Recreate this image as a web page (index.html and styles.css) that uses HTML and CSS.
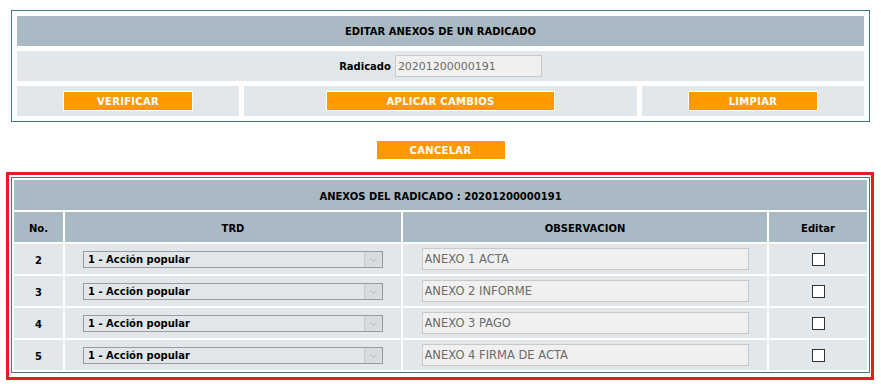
FILE: index.html
```html
<html>
<head>
	<title>Editar anexos</title>
	<meta http-equiv="Content-Type" content="text/html; charset=utf-8" />
	<link rel="stylesheet" href="styles.css">
</head>
<body>

<div class="editar">
	<div class="titulo">EDITAR ANEXOS DE UN RADICADO</div>
	<div class="radicado"><b>Radicado</b><input class="caja num" type="text" value="20201200000191" readonly></div>
	<div class="acciones">
		<div class="celda"><button class="boton">VERIFICAR</button></div>
		<div class="celda"><button class="boton largo">APLICAR CAMBIOS</button></div>
		<div class="celda"><button class="boton">LIMPIAR</button></div>
	</div>
</div>

<div class="cancelar"><button class="boton">CANCELAR</button></div>

<div class="marco">
<table class="anexos">
	<colgroup>
		<col class="c-no"><col class="c-trd"><col class="c-obs"><col class="c-edit">
	</colgroup>
	<tr><th colspan="4">ANEXOS DEL RADICADO : 20201200000191</th></tr>
	<tr><th>No.</th><th>TRD</th><th>OBSERVACION</th><th>Editar</th></tr>
	<tr>
		<td class="no">2</td>
		<td><span class="sel"><select><option>1 - Acci&oacute;n popular</option></select><span class="flecha"><svg width="17" height="15" viewBox="0 0 17 15"><path d="M5 6.5 L8.5 9.5 L12 6.5" fill="none" stroke="#b4b8bc" stroke-width="1"/></svg></span></span></td>
		<td><input class="caja obs" type="text" value="ANEXO 1 ACTA" readonly></td>
		<td><input class="check" type="checkbox"></td>
	</tr>
	<tr>
		<td class="no">3</td>
		<td><span class="sel"><select><option>1 - Acci&oacute;n popular</option></select><span class="flecha"><svg width="17" height="15" viewBox="0 0 17 15"><path d="M5 6.5 L8.5 9.5 L12 6.5" fill="none" stroke="#b4b8bc" stroke-width="1"/></svg></span></span></td>
		<td><input class="caja obs" type="text" value="ANEXO 2 INFORME" readonly></td>
		<td><input class="check" type="checkbox"></td>
	</tr>
	<tr>
		<td class="no">4</td>
		<td><span class="sel"><select><option>1 - Acci&oacute;n popular</option></select><span class="flecha"><svg width="17" height="15" viewBox="0 0 17 15"><path d="M5 6.5 L8.5 9.5 L12 6.5" fill="none" stroke="#b4b8bc" stroke-width="1"/></svg></span></span></td>
		<td><input class="caja obs" type="text" value="ANEXO 3 PAGO" readonly></td>
		<td><input class="check" type="checkbox"></td>
	</tr>
	<tr>
		<td class="no">5</td>
		<td><span class="sel"><select><option>1 - Acci&oacute;n popular</option></select><span class="flecha"><svg width="17" height="15" viewBox="0 0 17 15"><path d="M5 6.5 L8.5 9.5 L12 6.5" fill="none" stroke="#b4b8bc" stroke-width="1"/></svg></span></span></td>
		<td><input class="caja obs" type="text" value="ANEXO 4 FIRMA DE ACTA" readonly></td>
		<td><input class="check" type="checkbox"></td>
	</tr>
</table>
</div>

</body>
</html>
```

FILE: styles.css
```css
body {
	margin: 0;
	font-family: "DejaVu Sans", Verdana, sans-serif;
	font-size: 10px;
	color: #000;
}

/* caja superior */
.editar {
	margin: 10px 11px 0 11px;
	border: 1px solid #3d7b7f;
	padding: 5px;
	display: grid;
	grid-template-rows: 30px 30px 30px;
	row-gap: 5px;
}

.titulo {
	background-color: #a9bac5;
	font-weight: bold;
	display: flex;
	align-items: center;
	justify-content: center;
}

.radicado {
	background-color: #e2e7eb;
	display: flex;
	align-items: center;
	justify-content: center;
	gap: 4px;
}

.acciones {
	display: grid;
	grid-template-columns: 222px 1fr 222px;
	column-gap: 5px;
}

.celda {
	background-color: #e2e7eb;
	display: flex;
	align-items: center;
	justify-content: center;
}

.boton {
	box-sizing: border-box;
	width: 130px;
	height: 20px;
	margin: 0;
	padding: 0;
	border: 1px solid #fff;
	background-color: #ff9900;
	color: #fff;
	font-family: "DejaVu Sans", Verdana, sans-serif;
	font-size: 10px;
	font-weight: bold;
	letter-spacing: 0.3px;
}

.boton.largo {
	width: 229px;
}

.caja {
	box-sizing: border-box;
	height: 22px;
	margin: 0;
	padding: 0 2px;
	border: 1px solid #c9c9c9;
	background-color: #f0f0f0;
	color: #6b6b6b;
	font-family: "DejaVu Sans", Verdana, sans-serif;
	font-size: 11px;
	outline: none;
}

.caja.num {
	width: 147px;
}

.caja.obs {
	width: 327px;
	display: block;
	margin: 0 auto;
	font-size: 11.5px;
}

.cancelar {
	margin-top: 18px;
	display: flex;
	justify-content: center;
}

/* tabla de anexos */
.marco {
	margin: 12px 7px 0 6px;
	border: 3px solid #e31b23;
	padding: 2px 1px 4px 2px;
}

.anexos {
	width: 859px;
	table-layout: fixed;
	border: 1px solid #3d7b7f;
	border-collapse: separate;
	border-spacing: 2px;
	font-size: 10px;
}

.c-no { width: 49px; }
.c-trd { width: 336px; }
.c-obs { width: 364px; }
.c-edit { width: 98px; }

th, td {
	height: 30px;
	padding: 0;
	text-align: center;
	vertical-align: middle;
	font-size: 10px;
}

th {
	background-color: #a9bac5;
	font-weight: bold;
	padding-top: 2px;
}

td {
	background-color: #e2e7eb;
}

td.no {
	font-weight: bold;
	padding-top: 2px;
}

.sel {
	position: relative;
	display: block;
	width: 300px;
	height: 17px;
	margin: 0 auto;
}

.sel select {
	-webkit-appearance: none;
	appearance: none;
	box-sizing: border-box;
	display: block;
	width: 300px;
	height: 17px;
	margin: 0;
	padding: 0 0 0 4px;
	border: 1px solid #9a9a9a;
	border-radius: 0;
	background-color: #e3e7eb;
	color: #000;
	font-family: "DejaVu Sans", Verdana, sans-serif;
	font-size: 10px;
	font-weight: bold;
}

.flecha {
	position: absolute;
	top: 1px;
	right: 1px;
	width: 17px;
	height: 15px;
	background-color: #d9dcdf;
	border-left: 1px solid #c8ccd0;
}

.flecha svg {
	display: block;
}

.check {
	-webkit-appearance: none;
	appearance: none;
	box-sizing: border-box;
	display: block;
	width: 13px;
	height: 13px;
	margin: 0 auto;
	border: 1px solid #333;
	border-radius: 0;
	background-color: #fff;
}
```
